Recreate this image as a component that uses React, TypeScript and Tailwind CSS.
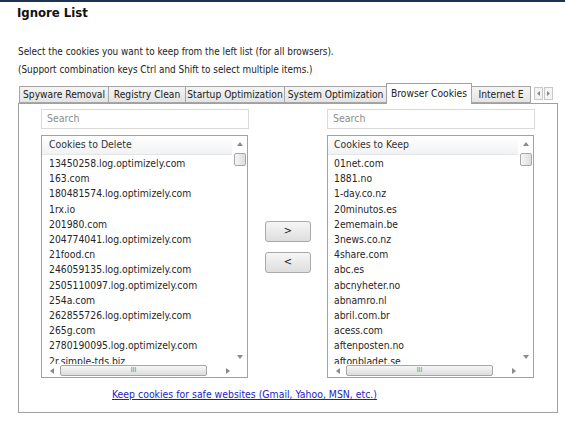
import React from "react";

const leftItems = [
  "13450258.log.optimizely.com",
  "163.com",
  "180481574.log.optimizely.com",
  "1rx.io",
  "201980.com",
  "204774041.log.optimizely.com",
  "21food.cn",
  "246059135.log.optimizely.com",
  "2505110097.log.optimizely.com",
  "254a.com",
  "262855726.log.optimizely.com",
  "265g.com",
  "2780190095.log.optimizely.com",
  "2r.simple-tds.biz",
];

const rightItems = [
  "01net.com",
  "1881.no",
  "1-day.co.nz",
  "20minutos.es",
  "2ememain.be",
  "3news.co.nz",
  "4share.com",
  "abc.es",
  "abcnyheter.no",
  "abnamro.nl",
  "abril.com.br",
  "acess.com",
  "aftenposten.no",
  "aftonbladet.se",
];

function Tri({ dir }: { dir: "up" | "down" | "left" | "right" }) {
  const pts =
    dir === "up"
      ? "0,4 3,0 6,4"
      : dir === "down"
      ? "0,0 6,0 3,4"
      : dir === "left"
      ? "4,0 4,6 0,3"
      : "0,0 0,6 4,3";
  const w = dir === "up" || dir === "down" ? 6 : 4;
  const h = dir === "up" || dir === "down" ? 4 : 6;
  return (
    <svg width={w} height={h} viewBox={`0 0 ${w} ${h}`}>
      <polygon points={pts} fill="#8a8a8a" />
    </svg>
  );
}

function ListBox({ header, items, textPad }: { header: string; items: string[]; textPad: string }) {
  return (
    <div className="w-[207px] h-[243px] border border-[#9ea3aa] bg-white flex flex-col overflow-hidden">
      <div className="flex flex-1 min-h-0">
        <div className="flex-1 min-w-0 flex flex-col overflow-hidden">
          <div
            className={`h-[19px] shrink-0 flex items-center ${textPad} bg-gradient-to-b from-[#ffffff] to-[#f1f2f4] border-b border-[#e3e5e8] text-[10.4px] text-[#333]`}
          >
            {header}
          </div>
          <div className={`pt-[1px] ${textPad} text-[10.3px] leading-[15.2px] text-[#262626] whitespace-nowrap`}>
            {items.map((t) => (
              <div key={t}>{t}</div>
            ))}
          </div>
        </div>
        <div className="w-[15px] shrink-0 flex flex-col items-center pt-[6px] pb-[5px]">
          <Tri dir="up" />
          <div className="mt-[7px] w-[12px] h-[13px] rounded-[2px] border border-[#a6a6a6] bg-gradient-to-r from-[#f6f6f6] to-[#dedede]" />
          <div className="flex-1" />
          <Tri dir="down" />
        </div>
      </div>
      <div className="h-[13px] shrink-0 flex items-center">
        <div className="w-[192px] flex items-center pl-[8px]">
          <Tri dir="left" />
          <div className="ml-[6px] w-[147px] h-[11px] rounded-[2px] border border-[#a6a6a6] bg-gradient-to-b from-[#f7f7f7] to-[#dcdcdc] flex items-center justify-center">
            <span className="text-[7px] leading-none text-[#777]">III</span>
          </div>
          <div className="ml-[19px]">
            <Tri dir="right" />
          </div>
        </div>
      </div>
    </div>
  );
}

function SearchBox() {
  return (
    <div className="w-[208px] h-[20px] border border-[#dadada] bg-white flex items-center pl-[5px] text-[10.5px] text-[#8d8d8d]">
      Search
    </div>
  );
}

function Btn({ label }: { label: string }) {
  return (
    <div className="w-[46px] h-[21px] rounded-[3px] border border-[#a9a9a9] bg-gradient-to-b from-[#f6f6f6] to-[#dedede] flex items-center justify-center text-[11px] text-[#222]">
      {label}
    </div>
  );
}

const tabs: { label: string; w: string; sel?: boolean }[] = [
  { label: "Spyware Removal", w: "w-[90px]" },
  { label: "Registry Clean", w: "w-[78px]" },
  { label: "Startup Optimization", w: "w-[100px]" },
  { label: "System Optimization", w: "w-[103px]" },
  { label: "Browser Cookies", w: "w-[86px]", sel: true },
  { label: "Internet E", w: "w-[60px]" },
];

export default function App() {
  return (
    <div
      className="w-[565px] h-[427px] bg-white overflow-hidden text-[#222]"
      style={{ fontFamily: '"DejaVu Sans Condensed", "Liberation Sans", Arial, sans-serif', fontStretch: "condensed" }}
    >
      <div className="h-[2px] bg-[#1d3354]" />
      <div className="pl-[17px] pt-[3px] text-[13px] leading-[16px] font-bold text-[#111]">Ignore List</div>
      <div className="pl-[18px] pt-[22px] text-[9.9px] leading-[18px] text-[#222]">
        <div>Select the cookies you want to keep from the left list (for all browsers).</div>
        <div>(Support combination keys Ctrl and Shift to select multiple items.)</div>
      </div>
      <div className="ml-[19px] mt-[4px] flex items-end h-[20px] relative z-10">
        {tabs.map((t) =>
          t.sel ? (
            <div
              key={t.label}
              className={`${t.w} h-[21px] -mb-px border border-b-0 border-[#a0a0a0] bg-white flex items-center justify-center text-[10.2px] text-[#222] -ml-px whitespace-nowrap`}
            >
              {t.label}
            </div>
          ) : (
            <div
              key={t.label}
              className={`${t.w} h-[17px] border border-[#a6a6a6] bg-gradient-to-b from-[#f4f4f4] to-[#e4e4e4] flex items-center justify-center text-[10.2px] text-[#222] -ml-px first:ml-0 whitespace-nowrap overflow-hidden`}
            >
              {t.label}
            </div>
          )
        )}
        <div className="ml-[3px] mb-[3px] flex">
          <div className="w-[9px] h-[13px] border border-[#c8c8c8] bg-[#f4f4f4] flex items-center justify-center">
            <svg width="3" height="5" viewBox="0 0 3 5"><polygon points="3,0 3,5 0,2.5" fill="#8a8a8a" /></svg>
          </div>
          <div className="ml-[1px] w-[9px] h-[13px] border border-[#c8c8c8] bg-[#f4f4f4] flex items-center justify-center">
            <svg width="3" height="5" viewBox="0 0 3 5"><polygon points="0,0 0,5 3,2.5" fill="#8a8a8a" /></svg>
          </div>
        </div>
      </div>
      <div className="ml-[18px] w-[540px] h-[310px] border border-[#a0a0a0] bg-white pt-[5px] pl-[22px]">
        <div className="flex">
          <div className="flex flex-col gap-[6px]">
            <SearchBox />
            <ListBox header="Cookies to Delete" items={leftItems} textPad="pl-[7px]" />
          </div>
          <div className="w-[78px] flex flex-col items-center pt-[112px] gap-[10px]">
            <Btn label=">" />
            <Btn label="<" />
          </div>
          <div className="flex flex-col gap-[6px]">
            <SearchBox />
            <ListBox header="Cookies to Keep" items={rightItems} textPad="pl-[6px]" />
          </div>
        </div>
        <div className="pl-[71px] pt-[9px] text-[10.4px] leading-[14px]">
          <span className="text-[#1c1cc8] underline">Keep cookies for safe websites (Gmail, Yahoo, MSN, etc.)</span>
        </div>
      </div>
    </div>
  );
}
